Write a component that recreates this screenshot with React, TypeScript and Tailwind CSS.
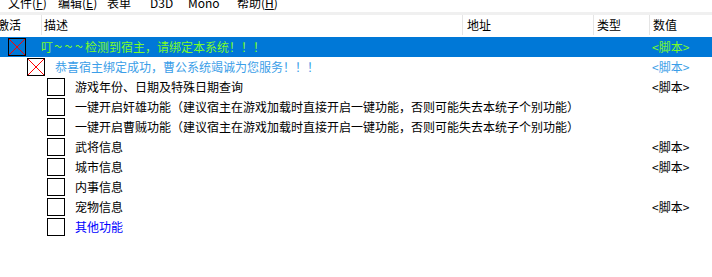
import type { ReactNode } from 'react'

const font = { fontFamily: '"Noto Sans CJK SC", "Microsoft YaHei", sans-serif' }

type Row = {
  text: ReactNode
  indent: 0 | 1 | 2
  crossed?: boolean
  color: string
  value?: boolean
  selected?: boolean
}

const rows: Row[] = [
  {
    text: (
      <>
        叮<span className="ml-[1px] text-[15px] leading-[12px] tracking-[2px]">~~~</span>
        检测到宿主，请绑定本系统！！！
      </>
    ),
    indent: 0,
    crossed: true,
    color: 'text-[#7cfc2a]',
    value: true,
    selected: true,
  },
  { text: '恭喜宿主绑定成功，曹公系统竭诚为您服务！！！', indent: 1, crossed: true, color: 'text-[#3b9ee8]', value: true },
  { text: '游戏年份、日期及特殊日期查询', indent: 2, color: 'text-black', value: true },
  { text: '一键开启奸雄功能（建议宿主在游戏加载时直接开启一键功能，否则可能失去本统子个别功能）', indent: 2, color: 'text-black' },
  { text: '一键开启曹贼功能（建议宿主在游戏加载时直接开启一键功能，否则可能失去本统子个别功能）', indent: 2, color: 'text-black' },
  { text: '武将信息', indent: 2, color: 'text-black', value: true },
  { text: '城市信息', indent: 2, color: 'text-black', value: true },
  { text: '内事信息', indent: 2, color: 'text-black' },
  { text: '宠物信息', indent: 2, color: 'text-black', value: true },
  { text: '其他功能', indent: 2, color: 'text-[#0000ff]' },
]

function MenuItem({ label, hot, w }: { label: string; hot?: string; w: string }) {
  return (
    <span className={`shrink-0 whitespace-nowrap ${w}`}>
      {label}
      {hot && (
        <>
          (<u>{hot}</u>)
        </>
      )}
    </span>
  )
}

function Box({ crossed, selected }: { crossed?: boolean; selected?: boolean }) {
  return (
    <div
      className={`relative h-[18px] w-[18px] shrink-0 border border-black ${selected ? 'bg-transparent' : 'bg-white'}`}
    >
      {crossed && (
        <svg className="absolute inset-0" width="16" height="16" viewBox="0 0 16 16">
          <line x1="0" y1="0" x2="16" y2="16" stroke="#ff0000" strokeWidth="1" />
          <line x1="16" y1="0" x2="0" y2="16" stroke="#ff0000" strokeWidth="1" />
        </svg>
      )}
    </div>
  )
}

function HeaderCell({ children, className }: { children: ReactNode; className: string }) {
  return (
    <div className={`flex h-[20px] items-center border-l border-[#e5e5e5] pl-[2px] ${className}`}>{children}</div>
  )
}

export default function App() {
  return (
    <div className="h-[277px] w-[712px] overflow-hidden bg-white text-[12px] text-black" style={font}>
      {/* menu bar, scrolled slightly off the top */}
      <div className="h-[12px] overflow-hidden">
        <div className="mt-[-5px] flex h-[16px] items-center pl-[8px] text-[12px] leading-[16px]">
          <MenuItem label="文件" hot="F" w="w-[50px]" />
          <MenuItem label="编辑" hot="E" w="w-[49px]" />
          <MenuItem label="表单" w="w-[43px]" />
          <MenuItem label="D3D" w="w-[38px]" />
          <MenuItem label="Mono" w="w-[49px]" />
          <MenuItem label="帮助" hot="H" w="w-[50px]" />
        </div>
      </div>
      <div className="h-[3px] bg-[#f0f0f0]" />

      {/* column headers */}
      <div className="flex h-[22px] items-start">
        <div className="flex h-[20px] w-[41px] items-center overflow-hidden">
          <span className="ml-[-3px] whitespace-nowrap">激活</span>
        </div>
        <HeaderCell className="w-[421px]">描述</HeaderCell>
        <HeaderCell className="w-[131px] pl-[4px]">地址</HeaderCell>
        <HeaderCell className="w-[56px] pl-[3px]">类型</HeaderCell>
        <HeaderCell className="flex-1 pl-[3px]">数值</HeaderCell>
      </div>

      {/* entries */}
      <div className="flex flex-col">
        {rows.map((r, i) => (
          <div key={i} className={`flex h-[20px] items-center ${r.selected ? 'bg-[#0078d7]' : ''}`}>
            <div className="flex min-w-0 flex-1 items-center overflow-hidden whitespace-nowrap">
              {r.indent === 0 && (
                <div className="flex items-center pl-[8px]">
                  <Box crossed={r.crossed} selected={r.selected} />
                  <span className={`ml-[15px] ${r.color}`}>{r.text}</span>
                </div>
              )}
              {r.indent === 1 && (
                <div className="flex items-center pl-[27px]">
                  <Box crossed={r.crossed} />
                  <span className={`ml-[10px] ${r.color}`}>{r.text}</span>
                </div>
              )}
              {r.indent === 2 && (
                <div className="flex items-center pl-[47px]">
                  <Box />
                  <span className={`ml-[10px] ${r.color}`}>{r.text}</span>
                </div>
              )}
            </div>
            <div className="w-[60px] shrink-0 whitespace-nowrap">
              {r.value && (
                <span className={r.selected ? 'text-[#7cfc2a]' : r.indent === 1 ? 'text-[#3b9ee8]' : 'text-black'}>
                  &lt;脚本&gt;
                </span>
              )}
            </div>
          </div>
        ))}
      </div>
    </div>
  )
}
